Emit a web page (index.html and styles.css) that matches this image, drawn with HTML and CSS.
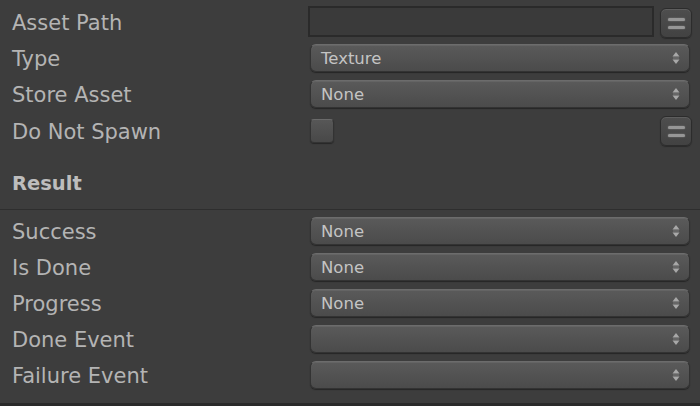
FILE: index.html
```html
<!DOCTYPE html>
<html>
<head>
<meta charset="utf-8">
<link rel="stylesheet" href="styles.css">
</head>
<body>
<div class="panel">
  <div class="section top">
    <div class="row r-path">
      <div class="label">Asset Path</div>
      <div class="ctrl">
        <div class="textfield"></div>
        <div class="eqbtn"><span class="bar"></span><span class="bar"></span></div>
      </div>
    </div>
    <div class="row">
      <div class="label">Type</div>
      <div class="ctrl"><div class="popup"><span class="ptext">Texture</span><svg class="arrows" width="8" height="14" viewBox="0 0 8 14"><path d="M4 1 L7.5 5.5 L0.5 5.5 Z" fill="#a8a8a8"/><path d="M4 13 L7.5 8.5 L0.5 8.5 Z" fill="#a8a8a8"/><rect x="1" y="6.5" width="6" height="1" fill="#7a7a7a"/></svg></div></div>
    </div>
    <div class="row">
      <div class="label">Store Asset</div>
      <div class="ctrl"><div class="popup"><span class="ptext">None</span><svg class="arrows" width="8" height="14" viewBox="0 0 8 14"><path d="M4 1 L7.5 5.5 L0.5 5.5 Z" fill="#a8a8a8"/><path d="M4 13 L7.5 8.5 L0.5 8.5 Z" fill="#a8a8a8"/><rect x="1" y="6.5" width="6" height="1" fill="#7a7a7a"/></svg></div></div>
    </div>
    <div class="row r-spawn">
      <div class="label">Do Not Spawn</div>
      <div class="ctrl">
        <div class="checkbox"></div>
        <div class="eqbtn push"><span class="bar"></span><span class="bar"></span></div>
      </div>
    </div>
  </div>
  <div class="header"><div class="htext">Result</div></div>
  <div class="section bottom">
    <div class="row">
      <div class="label">Success</div>
      <div class="ctrl"><div class="popup"><span class="ptext">None</span><svg class="arrows" width="8" height="14" viewBox="0 0 8 14"><path d="M4 1 L7.5 5.5 L0.5 5.5 Z" fill="#a8a8a8"/><path d="M4 13 L7.5 8.5 L0.5 8.5 Z" fill="#a8a8a8"/><rect x="1" y="6.5" width="6" height="1" fill="#7a7a7a"/></svg></div></div>
    </div>
    <div class="row">
      <div class="label">Is Done</div>
      <div class="ctrl"><div class="popup"><span class="ptext">None</span><svg class="arrows" width="8" height="14" viewBox="0 0 8 14"><path d="M4 1 L7.5 5.5 L0.5 5.5 Z" fill="#a8a8a8"/><path d="M4 13 L7.5 8.5 L0.5 8.5 Z" fill="#a8a8a8"/><rect x="1" y="6.5" width="6" height="1" fill="#7a7a7a"/></svg></div></div>
    </div>
    <div class="row">
      <div class="label">Progress</div>
      <div class="ctrl"><div class="popup"><span class="ptext">None</span><svg class="arrows" width="8" height="14" viewBox="0 0 8 14"><path d="M4 1 L7.5 5.5 L0.5 5.5 Z" fill="#a8a8a8"/><path d="M4 13 L7.5 8.5 L0.5 8.5 Z" fill="#a8a8a8"/><rect x="1" y="6.5" width="6" height="1" fill="#7a7a7a"/></svg></div></div>
    </div>
    <div class="row">
      <div class="label">Done Event</div>
      <div class="ctrl"><div class="popup"><span class="ptext"></span><svg class="arrows" width="8" height="14" viewBox="0 0 8 14"><path d="M4 1 L7.5 5.5 L0.5 5.5 Z" fill="#a8a8a8"/><path d="M4 13 L7.5 8.5 L0.5 8.5 Z" fill="#a8a8a8"/><rect x="1" y="6.5" width="6" height="1" fill="#7a7a7a"/></svg></div></div>
    </div>
    <div class="row">
      <div class="label">Failure Event</div>
      <div class="ctrl"><div class="popup"><span class="ptext"></span><svg class="arrows" width="8" height="14" viewBox="0 0 8 14"><path d="M4 1 L7.5 5.5 L0.5 5.5 Z" fill="#a8a8a8"/><path d="M4 13 L7.5 8.5 L0.5 8.5 Z" fill="#a8a8a8"/><rect x="1" y="6.5" width="6" height="1" fill="#7a7a7a"/></svg></div></div>
    </div>
  </div>
  <div class="footer"></div>
</div>
</body>
</html>
```
FILE: styles.css
```css
html, body {
  margin: 0;
  padding: 0;
  background: #3d3d3d;
}
.panel {
  width: 700px;
  height: 406px;
  display: flex;
  flex-direction: column;
  font-family: "DejaVu Sans", Verdana, sans-serif;
  color: #b4b4b4;
  overflow: hidden;
}
.section.top {
  padding-top: 4px;
  display: flex;
  flex-direction: column;
}
.row {
  height: 36px;
  display: flex;
  align-items: center;
}
.row.r-spawn {
  height: 38px;
}
.label {
  width: 296px;
  padding-left: 12px;
  padding-top: 2px;
  font-size: 21px;
  flex: none;
}
.ctrl {
  width: 384px;
  display: flex;
  align-items: center;
}
.textfield {
  width: 342px;
  height: 27px;
  border: 2px solid #2a2a2a;
  background: #3a3a3a;
  margin-top: -1px;
}
.eqbtn {
  width: 30px;
  height: 28px;
  margin-left: 6px;
  border: 1px solid #2c2c2c;
  border-radius: 6px;
  background: linear-gradient(#4e4e4e, #424242);
  box-shadow: inset 0 1px 0 #5e5e5e, 0 1px 1px #2a2a2a;
  display: flex;
  flex-direction: column;
  align-items: center;
  justify-content: center;
  gap: 5px;
  margin-top: 2px;
}
.eqbtn.push {
  margin-left: auto;
  margin-top: 0;
}
.bar {
  width: 17px;
  height: 3px;
  border-radius: 1.5px;
  background: #969696;
  box-shadow: 0 0 1.5px #8c8c8c;
}
.popup {
  margin: 0 2px;
  width: 380px;
  height: 28px;
  box-sizing: border-box;
  border-radius: 6px;
  background: linear-gradient(#5a5a5a, #4b4b4b);
  border: 1px solid #333333;
  border-top-color: #6c6c6c;
  box-shadow: inset 0 1px 0 #646464, 0 1px 1px #252525;
  display: flex;
  align-items: center;
  padding: 0 9px 0 10px;
}
.ptext {
  flex: 1;
  font-size: 16.5px;
  color: #c4c4c4;
}
.arrows {
  display: block;
  flex: none;
}
.checkbox {
  margin-left: 2px;
  width: 24px;
  height: 24px;
  box-sizing: border-box;
  border-radius: 4px;
  border: 1px solid #333333;
  border-top-color: #6a6a6a;
  background: linear-gradient(#575757, #484848);
  box-shadow: 0 1px 1px #262626;
}
.header {
  height: 60px;
  box-sizing: border-box;
  padding-top: 8px;
  display: flex;
  align-items: center;
  border-bottom: 1px solid #2e2e2e;
}
.htext {
  padding-left: 12px;
  font-size: 19.5px;
  font-weight: bold;
  color: #bdbdbd;
}
.section.bottom {
  padding-top: 3px;
  display: flex;
  flex-direction: column;
}
.footer {
  margin-top: auto;
  height: 3px;
  background: #2a2a2a;
}
```
